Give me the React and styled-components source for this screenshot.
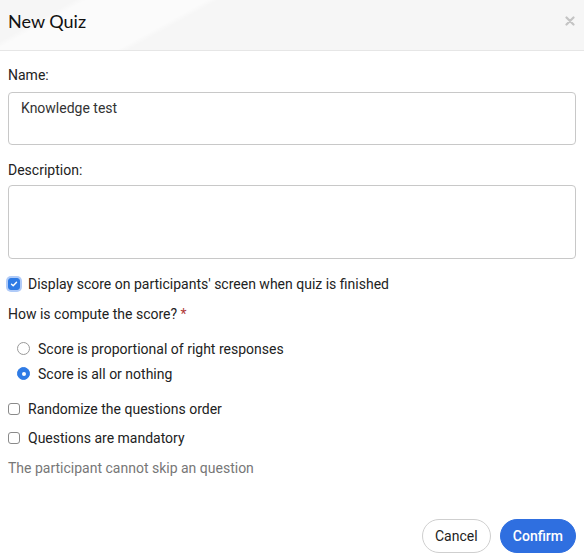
import React, { useState } from "react";
import styled, { createGlobalStyle } from "styled-components";

const GlobalStyle = createGlobalStyle`
  body {
    margin: 0;
    background: #fff;
    font-family: Roboto, "Liberation Sans", sans-serif;
    color: #222;
  }
`;

const Dialog = styled.div`
  width: 584px;
  height: 559px;
  display: flex;
  flex-direction: column;
  background: #fff;
`;

const Header = styled.div`
  box-sizing: border-box;
  height: 51px;
  display: flex;
  align-items: center;
  justify-content: space-between;
  padding: 0 8px 8px;
  border-bottom: 1px solid #e6e6e6;
  background:
    linear-gradient(151deg, transparent 0 36px, rgba(255, 255, 255, 0.6) 42px 100px, transparent 106px),
    #f6f6f6;
`;

const Title = styled.h1`
  margin: 0;
  font-family: Lato, "Open Sans", sans-serif;
  font-weight: 400;
  font-size: 18px;
  color: #111;
`;

const CloseButton = styled.button`
  border: none;
  background: none;
  padding: 0;
  margin-right: 1px;
  color: #c4c4c4;
  display: flex;
  cursor: pointer;
`;

const Body = styled.div`
  flex: 1;
  display: flex;
  flex-direction: column;
  padding: 16px 8px 0;
`;

const Label = styled.label`
  font-size: 14px;
  color: #222;
  margin-bottom: ${(p) => p.$gap}px;
  line-height: 17px;
`;

const TextBox = styled.textarea`
  box-sizing: border-box;
  width: 100%;
  height: ${(p) => p.$height}px;
  border: 1px solid #c8c8c8;
  border-radius: 4px;
  padding: 7px 12px;
  font-family: Roboto, "Liberation Sans", sans-serif;
  font-size: 14px;
  color: #333;
  resize: none;
  margin: 0 0 ${(p) => p.$gap}px;
  outline: none;
`;

const OptionRow = styled.label`
  display: flex;
  align-items: center;
  gap: 8px;
  font-size: 14px;
  color: #222;
  height: 17px;
  margin-left: ${(p) => p.$indent || 0}px;
  margin-bottom: ${(p) => p.$gap || 0}px;
  cursor: pointer;
`;

const Box = styled.span`
  box-sizing: border-box;
  width: 12px;
  height: 12px;
  border-radius: 3px;
  flex-shrink: 0;
  display: flex;
  align-items: center;
  justify-content: center;
  border: 1px solid ${(p) => (p.$checked ? "#2f7be5" : "#8a8a8a")};
  background: ${(p) => (p.$checked ? "#2f7be5" : "#fff")};
  box-shadow: ${(p) => (p.$checked ? "0 0 0 2px rgba(80, 140, 240, 0.45)" : "none")};
`;

const Radio = styled.span`
  box-sizing: border-box;
  width: 13px;
  height: 13px;
  border-radius: 50%;
  flex-shrink: 0;
  display: flex;
  align-items: center;
  justify-content: center;
  border: 1px solid ${(p) => (p.$checked ? "#2f7be5" : "#9a9a9a")};
  background: ${(p) => (p.$checked ? "#2f7be5" : "#fff")};

  &::after {
    content: "";
    display: ${(p) => (p.$checked ? "block" : "none")};
    width: 4px;
    height: 4px;
    border-radius: 50%;
    background: #fff;
  }
`;

const Question = styled.div`
  font-size: 14px;
  color: #222;
  margin-bottom: 18px;
  padding-top: 1px;
`;

const Required = styled.span`
  color: #b03a3a;
`;

const Hint = styled.div`
  font-size: 14px;
  color: #777;
  padding-top: 1px;
`;

const Footer = styled.div`
  display: flex;
  justify-content: flex-end;
  gap: 9px;
  padding: 0 8px 6px;
`;

const Button = styled.button`
  height: 34px;
  border-radius: 17px;
  padding: 0 12px;
  font-family: Roboto, "Liberation Sans", sans-serif;
  font-size: 14px;
  cursor: pointer;
  border: 1px solid ${(p) => (p.$primary ? "#2f6fe0" : "#cfcfcf")};
  background: ${(p) => (p.$primary ? "#2f6fe0" : "#fff")};
  color: ${(p) => (p.$primary ? "#fff" : "#222")};
  font-weight: ${(p) => (p.$primary ? 500 : 400)};
  min-width: ${(p) => (p.$primary ? 76 : 69)}px;
`;

function Check({ checked }) {
  return (
    <Box $checked={checked}>
      {checked && (
        <svg width="8" height="8" viewBox="0 0 8 8">
          <path d="M1.5 4.2 L3.2 5.8 L6.5 2.2" fill="none" stroke="#fff" strokeWidth="1.4" strokeLinecap="round" strokeLinejoin="round" />
        </svg>
      )}
    </Box>
  );
}

export default function App() {
  const [name, setName] = useState("Knowledge test");
  const [desc, setDesc] = useState("");
  const [display, setDisplay] = useState(true);
  const [mode, setMode] = useState("all");
  const [random, setRandom] = useState(false);
  const [mandatory, setMandatory] = useState(false);

  return (
    <>
      <GlobalStyle />
      <Dialog>
        <Header>
          <Title>New Quiz</Title>
          <CloseButton aria-label="Close">
            <svg width="10" height="10" viewBox="0 0 10 10">
              <path d="M1.5 1.5 L8.5 8.5 M8.5 1.5 L1.5 8.5" stroke="currentColor" strokeWidth="2.2" strokeLinecap="round" />
            </svg>
          </CloseButton>
        </Header>
        <Body>
          <Label $gap={8}>Name:</Label>
          <TextBox $height={53} $gap={17} value={name} onChange={(e) => setName(e.target.value)} />
          <Label $gap={6}>Description:</Label>
          <TextBox $height={74} $gap={16} value={desc} onChange={(e) => setDesc(e.target.value)} />
          <OptionRow $gap={13} onClick={() => setDisplay(!display)}>
            <Check checked={display} />
            Display score on participants' screen when quiz is finished
          </OptionRow>
          <Question>
            How is compute the score? <Required>*</Required>
          </Question>
          <OptionRow $indent={9} $gap={8} onClick={() => setMode("prop")}>
            <Radio $checked={mode === "prop"} />
            Score is proportional of right responses
          </OptionRow>
          <OptionRow $indent={9} $gap={18} onClick={() => setMode("all")}>
            <Radio $checked={mode === "all"} />
            Score is all or nothing
          </OptionRow>
          <OptionRow $gap={12} onClick={() => setRandom(!random)}>
            <Check checked={random} />
            Randomize the questions order
          </OptionRow>
          <OptionRow $gap={13} onClick={() => setMandatory(!mandatory)}>
            <Check checked={mandatory} />
            Questions are mandatory
          </OptionRow>
          <Hint>The participant cannot skip an question</Hint>
        </Body>
        <Footer>
          <Button>Cancel</Button>
          <Button $primary>Confirm</Button>
        </Footer>
      </Dialog>
    </>
  );
}
